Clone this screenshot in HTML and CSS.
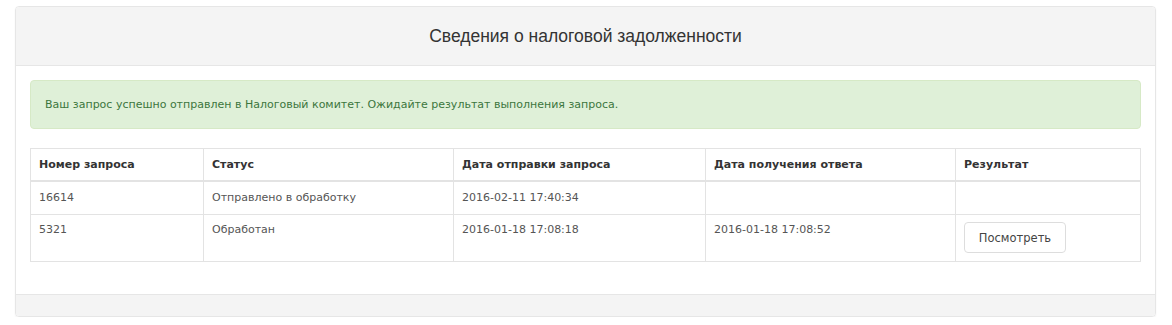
FILE: index.html
```html
<!DOCTYPE html>
<html lang="ru">
<head>
    <meta charset="UTF-8">
    <title>Сведения о налоговой задолженности</title>
    <link rel="stylesheet" href="styles.css">
</head>
<body>
    <div class="panel">
        <div class="panel-heading">Сведения о налоговой задолженности</div>

        <div class="panel-body">
            <!-- Success message -->
            <div class="alert-success">Ваш запрос успешно отправлен в Налоговый комитет. Ожидайте результат выполнения запроса.</div>

            <table class="requests">
                <thead>
                    <tr>
                        <th class="col-num">Номер запроса</th>
                        <th class="col-status">Статус</th>
                        <th class="col-sent">Дата отправки запроса</th>
                        <th class="col-recv">Дата получения ответа</th>
                        <th class="col-result">Результат</th>
                    </tr>
                </thead>
                <tbody>
                    <tr>
                        <td>16614</td>
                        <td>Отправлено в обработку</td>
                        <td>2016-02-11 17:40:34</td>
                        <td></td>
                        <td></td>
                    </tr>
                    <tr class="tall">
                        <td>5321</td>
                        <td>Обработан</td>
                        <td>2016-01-18 17:08:18</td>
                        <td>2016-01-18 17:08:52</td>
                        <td><button class="view-button">Посмотреть</button></td>
                    </tr>
                </tbody>
            </table>
        </div>

        <div class="panel-footer"></div>
    </div>
</body>
</html>
```

FILE: styles.css
```css
body {
    margin: 0;
    padding: 6px 0 0 15px;
    background-color: white;
    font-family: "Liberation Sans", Arial, sans-serif;
    color: #333;
}

.panel {
    width: 1141px;
    box-sizing: border-box;
    border: 1px solid #e6e6e6;
    border-radius: 4px;
    box-shadow: 0 1px 2px rgba(0, 0, 0, 0.06);
    overflow: hidden;
}

.panel-heading {
    height: 58px;
    line-height: 58px;
    background-color: #f4f4f4;
    border-bottom: 1px solid #e6e6e6;
    text-align: center;
    font-size: 17.5px;
    color: #333;
}

.panel-body {
    padding: 14px 14px 32px 14px;
}

.alert-success {
    height: 49px;
    box-sizing: border-box;
    padding: 0 14px;
    line-height: 47px;
    background-color: #dff0d8;
    border: 1px solid #d6e9c6;
    border-radius: 4px;
    color: #3c763d;
    font-family: "DejaVu Sans", Verdana, sans-serif;
    font-size: 11px;
    margin-bottom: 19px;
}

/* Requests table */
.requests {
    width: 1111px;
    border-collapse: collapse;
    table-layout: fixed;
    font-family: "DejaVu Sans", Verdana, sans-serif;
    font-size: 11px;
    color: #555;
}

.requests th,
.requests td {
    border: 1px solid #e3e3e3;
    padding: 0 8px;
    text-align: left;
    vertical-align: top;
}

.requests th {
    height: 31px;
    line-height: 31px;
    border-bottom-width: 2px;
    font-weight: bold;
    color: #333;
}

.requests td {
    height: 32px;
    line-height: 32px;
}

.requests tr.tall td {
    height: 46px;
    line-height: 30px;
}

.col-num { width: 156px; }
.col-status { width: 233px; }
.col-sent { width: 235px; }
.col-recv { width: 233px; }

.view-button {
    margin-top: 7px;
    width: 102px;
    height: 31px;
    background-color: white;
    border: 1px solid #ddd;
    border-radius: 4px;
    font-family: "DejaVu Sans", Verdana, sans-serif;
    font-size: 11.5px;
    color: #444;
    cursor: pointer;
}

.panel-footer {
    height: 21px;
    background-color: #f4f4f4;
    border-top: 1px solid #e6e6e6;
}
```
